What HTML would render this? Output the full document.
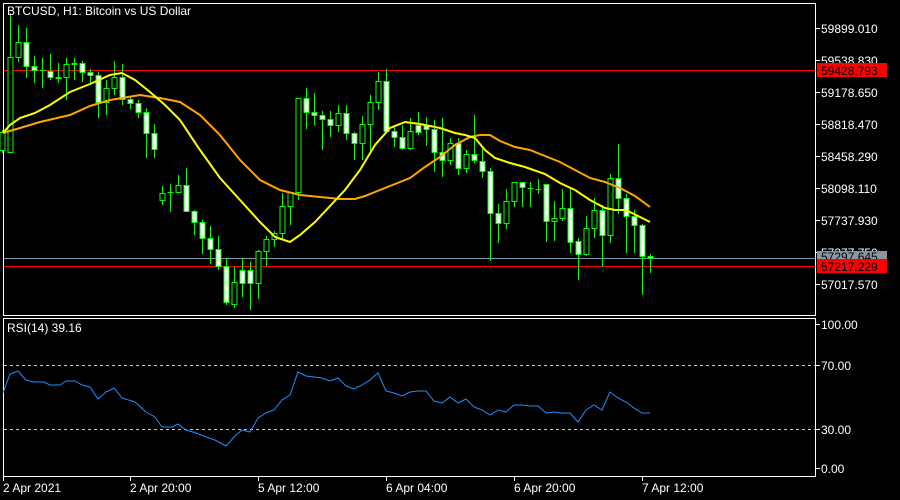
<!DOCTYPE html>
<html><head><meta charset="utf-8">
<style>
html,body{margin:0;padding:0;background:#000;width:900px;height:500px;overflow:hidden}
svg{display:block}
text{font-family:"Liberation Sans",sans-serif;font-size:12px;fill:#fff}
</style></head>
<body>
<svg id="s" width="900" height="500" xmlns="http://www.w3.org/2000/svg">
<rect width="900" height="500" fill="#000"/>
<rect x="3.5" y="3.5" width="812" height="312" fill="none" stroke="#fff"/>
<rect x="3.5" y="318.5" width="812" height="158" fill="none" stroke="#fff"/>
<g id="g"></g>
<text x="7" y="15">BTCUSD, H1:  Bitcoin vs US Dollar</text>
<text x="7" y="332">RSI(14) 39.16</text>
</svg>
<script>
var g=document.getElementById('g'),h='';
function L(x1,y1,x2,y2,c,extra){h+='<line x1="'+x1+'" y1="'+y1+'" x2="'+x2+'" y2="'+y2+'" stroke="'+c+'" '+(extra||'')+'/>';}
// horizontal lines
L(4,70.5,815,70.5,'#f00');L(4,258.5,815,258.5,'#8a97a3');L(4,266.5,815,266.5,'#f00');
L(4,365.5,815,365.5,'#ccc','stroke-dasharray="3,3"');L(4,429.5,815,429.5,'#ccc','stroke-dasharray="3,3"');
// candles [O,C,H,L]
var c=[[150,132,130,153],[152,57,13,152],[57,42,25,62],[42,66,28,78],[66,70,56,83],[70,70,58,88],[71,77,54,80],[77,78,63,83],[77,64,58,100],[64,63,58,80],[63,72,61,82],[72,75,69,83],[75,102,72,118],[102,88,80,115],[88,77,61,95],[77,99,64,105],[99,103,96,109],[103,112,100,118],[112,133,108,158],[133,149,124,158],[200,193,186,205],[192,192,184,212],[192,185,175,193],[185,211,168,212],[211,222,210,235],[222,238,220,254],[238,249,226,264],[249,266,236,270],[266,302,258,305],[304,282,267,308],[270,283,258,297],[270,283,262,310],[283,251,250,299],[251,239,236,266],[239,233,231,247],[233,206,193,240],[206,192,192,225],[192,98,98,200],[98,112,88,129],[112,115,93,125],[115,119,111,150],[119,125,111,137],[125,113,105,132],[113,133,105,140],[133,143,132,160],[143,124,116,160],[124,102,95,152],[102,81,72,110],[81,131,69,133],[131,137,125,147],[137,148,125,150],[148,131,118,150],[125,132,112,135],[125,129,117,146],[129,152,120,172],[152,160,118,177],[160,143,138,165],[143,168,138,175],[168,154,150,173],[154,160,115,163],[161,171,146,178],[171,213,168,261],[213,223,204,243],[223,201,189,229],[201,182,182,207],[182,187,182,207],[188,188,182,207],[189,189,179,194],[184,221,184,242],[221,218,201,241],[218,208,189,221],[208,242,187,253],[241,254,238,280],[254,228,216,256],[228,210,198,238],[210,235,205,267],[235,178,174,243],[178,198,144,214],[198,216,194,253],[216,225,210,253],[225,256,224,295],[256,258,254,273]];
c.forEach(function(k,i){var x=2+8*i+.5;var t=Math.min(k[0],k[1]),b=Math.max(k[0],k[1]);
L(x,k[2],x,t,'#0f0');L(x,b,x,k[3],'#0f0');
if(b-t<1){L(x-3,t+.5,x+3,t+.5,'#0f0');}
else h+='<rect x="'+(x-2.5)+'" y="'+(t+.5)+'" width="5" height="'+(b-t)+'" fill="'+(k[1]<k[0]?'#000':'#fff')+'" stroke="#0f0"/>';});
function P(pts,c,w){h+='<polyline fill="none" stroke="'+c+'" stroke-width="'+w+'" points="'+pts+'"/>';}
P('3,133 20,128 40,122 70,115 90,106 110,100 140,95 160,98 180,102 200,115 220,135 240,160 260,180 280,190 300,195 320,197 340,199 355,199 365,196 380,190 395,184 410,178 425,167 440,157 455,145 470,137 480,135 490,135 500,141 515,147 530,150 545,156 560,162 575,170 590,178 605,182 620,188 635,196 650,207','#ffa500',2);
P('3,133 10,125 20,118 35,113 50,105 70,92 90,84 110,75 122,73 135,80 150,92 165,105 180,120 200,150 220,178 240,200 260,222 275,237 290,242 300,235 315,222 330,206 345,190 360,170 375,145 390,128 405,122 420,124 440,128 455,133 465,135 475,138 485,150 495,158 510,163 525,167 545,174 560,183 575,190 590,200 605,208 615,210 625,210 630,212 640,217 650,222','#ff0',2);
P('3,393 10,374 18,371 26,380 34,382 44,382 50,385 60,385 66,381 75,381 82,385 90,387 98,399 106,392 114,388 122,398 135,402 146,412 155,417 162,427 172,427 178,424 186,430 196,433 206,437 215,440 226,446 236,435 242,430 250,432 258,418 266,413 274,410 282,400 290,395 298,372 306,376 314,377 322,378 330,381 338,378 346,386 354,389 362,385 370,380 378,373 386,391 394,393 402,396 410,392 418,391 426,391 434,401 442,403 450,397 458,403 466,399 474,407 482,410 490,415 498,410 506,412 514,405 522,405 530,406 538,406 546,413 554,412 562,413 570,413 578,422 586,410 594,405 602,410 610,392 618,398 626,402 634,408 642,413 650,413','#1e90ff',1);
// price axis
var pr=['59899.010','59538.830','59178.650','58818.470','58458.290','58098.110','57737.930','57377.750','57017.570'];
pr.forEach(function(p,i){var y=28+32*i;L(816,y+.5,820,y+.5,'#fff');h+='<text x="821" y="'+(y+5)+'">'+p+'</text>';});
h+='<rect x="817" y="251" width="70" height="9" fill="#8a97a3"/><text x="821" y="261" style="fill:#000">57297.645</text>';
h+='<rect x="817" y="259" width="70" height="14" fill="#f00"/><text x="821" y="271" style="fill:#000">57217.229</text>';
h+='<rect x="817" y="63" width="70" height="14" fill="#f00"/><text x="821" y="75" style="fill:#000">59428.793</text>';
[['100.00',324],['70.00',365],['30.00',429],['0.00',468]].forEach(function(a){L(816,a[1]+.5,820,a[1]+.5,'#fff');h+='<text x="821" y="'+(a[1]+5)+'">'+a[0]+'</text>';});
[['2 Apr 2021',3],['2 Apr 20:00',130],['5 Apr 12:00',258],['6 Apr 04:00',386],['6 Apr 20:00',514],['7 Apr 12:00',642]].forEach(function(a){L(a[0]?a[1]+.5:0,477,a[1]+.5,481,'#fff');h+='<text x="'+(a[1])+'" y="492">'+a[0]+'</text>';});
g.innerHTML=h;
</script>
</body></html>
